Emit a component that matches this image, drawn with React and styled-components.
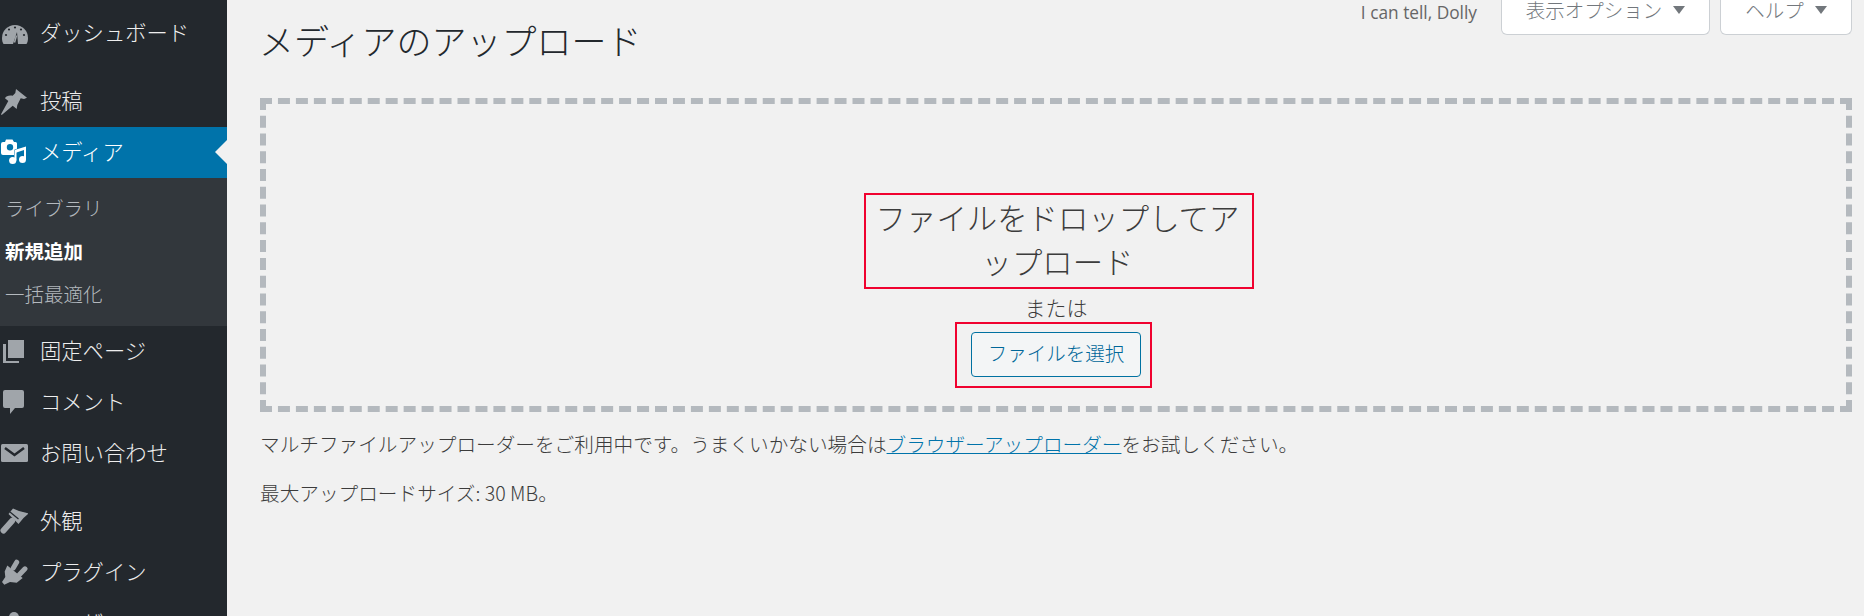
import React from "react";
import styled, { createGlobalStyle } from "styled-components";

const GlobalStyle = createGlobalStyle`
  html, body {
    margin: 0;
    height: 616px;
    overflow: hidden;
    background: #f1f1f1;
  }
  body {
    font-family: "Noto Sans CJK JP", "Noto Sans", sans-serif;
    font-size: 19.5px;
    font-weight: 300;
    color: #3c3c3c;
  }
`;

const Page = styled.div`
  display: flex;
  height: 616px;
  overflow: hidden;
`;

const Sidebar = styled.nav`
  flex: 0 0 227px;
  background: #23282d;
  padding-top: 8px;
  overflow: hidden;
`;

const MenuItem = styled.div`
  position: relative;
  display: flex;
  align-items: center;
  gap: 12px;
  height: 51px;
  margin-bottom: ${(p) => (p.$sep ? "17px" : "0")};
  font-size: 21.3px;
  color: ${(p) => (p.$active ? "#fff" : "#eee")};
  background: ${(p) => (p.$active ? "#0073aa" : "transparent")};
  svg {
    flex: 0 0 28px;
    margin-bottom: 2px;
    color: ${(p) => (p.$active ? "#fff" : "#a0a5aa")};
  }
  ${(p) =>
    p.$active &&
    `&::after {
      content: "";
      position: absolute;
      right: 0;
      top: 13px;
      border: 12px solid transparent;
      border-right-color: #f1f1f1;
      border-left-width: 0;
    }`}
`;

const MenuLabel = styled.span`
  margin-bottom: 4px;
  line-height: 1.2;
`;

const SubMenu = styled.div`
  background: #32373c;
  padding: 9px 0 10px 5px;
`;

const SubItem = styled.div`
  height: 43px;
  line-height: 41px;
  font-size: 19.5px;
  font-weight: ${(p) => (p.$current ? 700 : 300)};
  color: ${(p) => (p.$current ? "#fff" : "rgba(240, 245, 250, 0.7)")};
`;

const Main = styled.main`
  flex: 1;
  min-width: 0;
  padding: 0 12px 0 33px;
`;

const Header = styled.header`
  display: flex;
  justify-content: space-between;
  align-items: flex-start;
  height: 98px;
`;

const Title = styled.h1`
  margin: 16px 0 0 -1px;
  font-size: 35px;
  line-height: 48px;
  font-weight: 300;
  color: #23282d;
`;

const ScreenMeta = styled.div`
  display: flex;
  align-items: flex-start;
  gap: 10px;
`;

const Dolly = styled.span`
  margin-right: 14px;
  font-family: "Open Sans", sans-serif;
  font-size: 17.3px;
  font-weight: 400;
  line-height: 26px;
  color: #666;
`;

const MetaTab = styled.div`
  display: flex;
  align-items: center;
  justify-content: center;
  gap: 11px;
  box-sizing: border-box;
  width: ${(p) => p.$width}px;
  height: 35px;
  padding-bottom: 14px;
  background: #fff;
  border: 1px solid #ccd0d4;
  border-top: 0;
  border-radius: 0 0 6px 6px;
  color: #72777c;
  font-size: 19.5px;
  line-height: 20px;
  &::after {
    content: "";
    border: 6.5px solid transparent;
    border-top: 8px solid #72777c;
    border-bottom: 0;
  }
`;

const DropZone = styled.section`
  display: flex;
  flex-direction: column;
  align-items: center;
  border: 6px dashed #b4b9be;
  padding: 89px 0 18px;
`;

const DropTitle = styled.div`
  box-sizing: border-box;
  width: 390px;
  height: 96px;
  margin-left: 6px;
  padding-right: 3px;
  border: 2px solid #f0022f;
  font-size: 30.4px;
  line-height: 44px;
  text-align: center;
`;

const OrText = styled.div`
  padding-top: 4px;
  height: 29px;
  line-height: 28px;
  font-size: 21px;
`;

const ButtonFrame = styled.div`
  box-sizing: border-box;
  display: flex;
  align-items: center;
  justify-content: center;
  width: 197px;
  height: 66px;
  margin-right: 5px;
  border: 2px solid #f0022f;
`;

const SelectButton = styled.button`
  box-sizing: border-box;
  width: 170px;
  height: 45px;
  margin: 0 0 2px 5px;
  padding: 0 0 3px;
  border: 1px solid #0071a1;
  border-radius: 4px;
  background: #f3f5f6;
  color: #006799;
  font-family: inherit;
  font-weight: 300;
  font-size: 19.5px;
`;

const Note = styled.p`
  margin: ${(p) => p.$top}px 0 0;
  line-height: 30px;
  font-size: 19.65px;
`;

const Link = styled.a`
  color: #0073aa;
  text-decoration: underline;
`;

const Svg = ({ children }) => (
  <svg width="28" height="28" viewBox="0 0 28 28" fill="currentColor">
    {children}
  </svg>
);

const icons = {
  dashboard: (
    <Svg>
      <path d="M2 19a13 13 0 0 1 26 0c0 2.500-.5 4.500-1.500 6h-23C2.500 23.500 2 21.500 2 19z" />
      <path d="M13 25l4-12 1 12z" fill="#23282d" />
      <path d="M14.500 23.500l2-7" stroke="currentColor" strokeWidth="1.500" />
      <g fill="#23282d">
        <circle cx="15" cy="8.500" r="1.100" />
        <circle cx="9" cy="10.500" r="1.100" />
        <circle cx="21" cy="10.500" r="1.100" />
        <circle cx="6" cy="16" r="1.100" />
        <circle cx="24" cy="16" r="1.100" />
      </g>
    </Svg>
  ),
  pin: (
    <Svg>
      <path d="M16 2l11 8.700-3 1.300-3.300-.7-3.400 6.700-.6 4-4-3.300L1.700 28l-.7-.7L8.300 14 5 11.300c1-2.300 4-3.300 7.700-2.600L15.300 6z" />
    </Svg>
  ),
  media: (
    <Svg>
      <path
        fillRule="evenodd"
        d="M3 4h2l1-2.500h6.500L14 4h1.500A1.500 1.500 0 0 1 17 5.500V17H3a2 2 0 0 1-2-2V6a2 2 0 0 1 2-2zm7 2a3.200 3.200 0 1 0 0 6.400A3.200 3.200 0 0 0 10 6z"
      />
      <path
        d="M14.500 12L26 8.500v13h-2V12l-7.500 2.500v8h-2z"
        stroke="#0073aa"
        strokeWidth="1"
        paintOrder="stroke"
      />
      <circle cx="12.700" cy="22.500" r="3.600" />
      <circle cx="22.500" cy="21.500" r="3.500" />
    </Svg>
  ),
  pages: (
    <Svg>
      <path d="M8 3h16v18H8z" />
      <path d="M3 7h3v17h13v2H3z" />
    </Svg>
  ),
  comment: (
    <Svg>
      <path d="M5 2h17a2 2 0 0 1 2 2v14a2 2 0 0 1-2 2h-7l-5 6v-6H5a2 2 0 0 1-2-2V4a2 2 0 0 1 2-2z" />
    </Svg>
  ),
  mail: (
    <Svg>
      <rect x="1" y="5" width="27" height="18" rx="1.500" />
      <path d="M5 9l9.500 7L24 9" fill="none" stroke="#23282d" strokeWidth="2.500" />
    </Svg>
  ),
  brush: (
    <Svg>
      <path d="M13 1.500L19 4l9.500 2.500-5 4.500-5 6L8.500 7z" />
      <path d="M10 5l8.500 7" stroke="#23282d" strokeWidth="1.200" />
      <path d="M3.500 23.500L12 14" stroke="currentColor" strokeWidth="6" strokeLinecap="round" />
    </Svg>
  ),
  plugin: (
    <Svg>
      <path d="M7.300 7.500L22.700 20l-6 4.800-6.700-.8-5.700 2.800L2 24l3.300-5-.6-5.500z" />
      <path d="M13.300 10l3.400-5.800M19.300 16.800l5.700-6" stroke="currentColor" strokeWidth="5" strokeLinecap="round" />
    </Svg>
  ),
  user: (
    <Svg>
      <circle cx="14" cy="8" r="5" />
      <path d="M4 24c0-6 4-9 10-9s10 3 10 9z" />
    </Svg>
  ),
};

const Item = ({ icon, label, ...rest }) => (
  <MenuItem {...rest}>
    {icons[icon]}
    <MenuLabel>{label}</MenuLabel>
  </MenuItem>
);

export default function App() {
  return (
    <>
      <GlobalStyle />
      <Page>
        <Sidebar>
          <Item $sep icon="dashboard" label="ダッシュボード" />
          <Item icon="pin" label="投稿" />
          <Item $active icon="media" label="メディア" />
          <SubMenu>
            <SubItem>ライブラリ</SubItem>
            <SubItem $current>新規追加</SubItem>
            <SubItem>一括最適化</SubItem>
          </SubMenu>
          <Item icon="pages" label="固定ページ" />
          <Item icon="comment" label="コメント" />
          <Item $sep icon="mail" label="お問い合わせ" />
          <Item icon="brush" label="外観" />
          <Item icon="plugin" label="プラグイン" />
          <Item icon="user" label="ユーザー" />
        </Sidebar>
        <Main>
          <Header>
            <Title>メディアのアップロード</Title>
            <ScreenMeta>
              <Dolly>I can tell, Dolly</Dolly>
              <MetaTab $width={209}>表示オプション</MetaTab>
              <MetaTab $width={132}>ヘルプ</MetaTab>
            </ScreenMeta>
          </Header>
          <DropZone>
            <DropTitle>
              ファイルをドロップしてア
              <br />
              ップロード
            </DropTitle>
            <OrText>または</OrText>
            <ButtonFrame>
              <SelectButton>ファイルを選択</SelectButton>
            </ButtonFrame>
          </DropZone>
          <Note $top={17}>
            マルチファイルアップローダーをご利用中です。うまくいかない場合は
            <Link href="#">ブラウザーアップローダー</Link>
            をお試しください。
          </Note>
          <Note $top={19}>最大アップロードサイズ: 30 MB。</Note>
        </Main>
      </Page>
    </>
  );
}
